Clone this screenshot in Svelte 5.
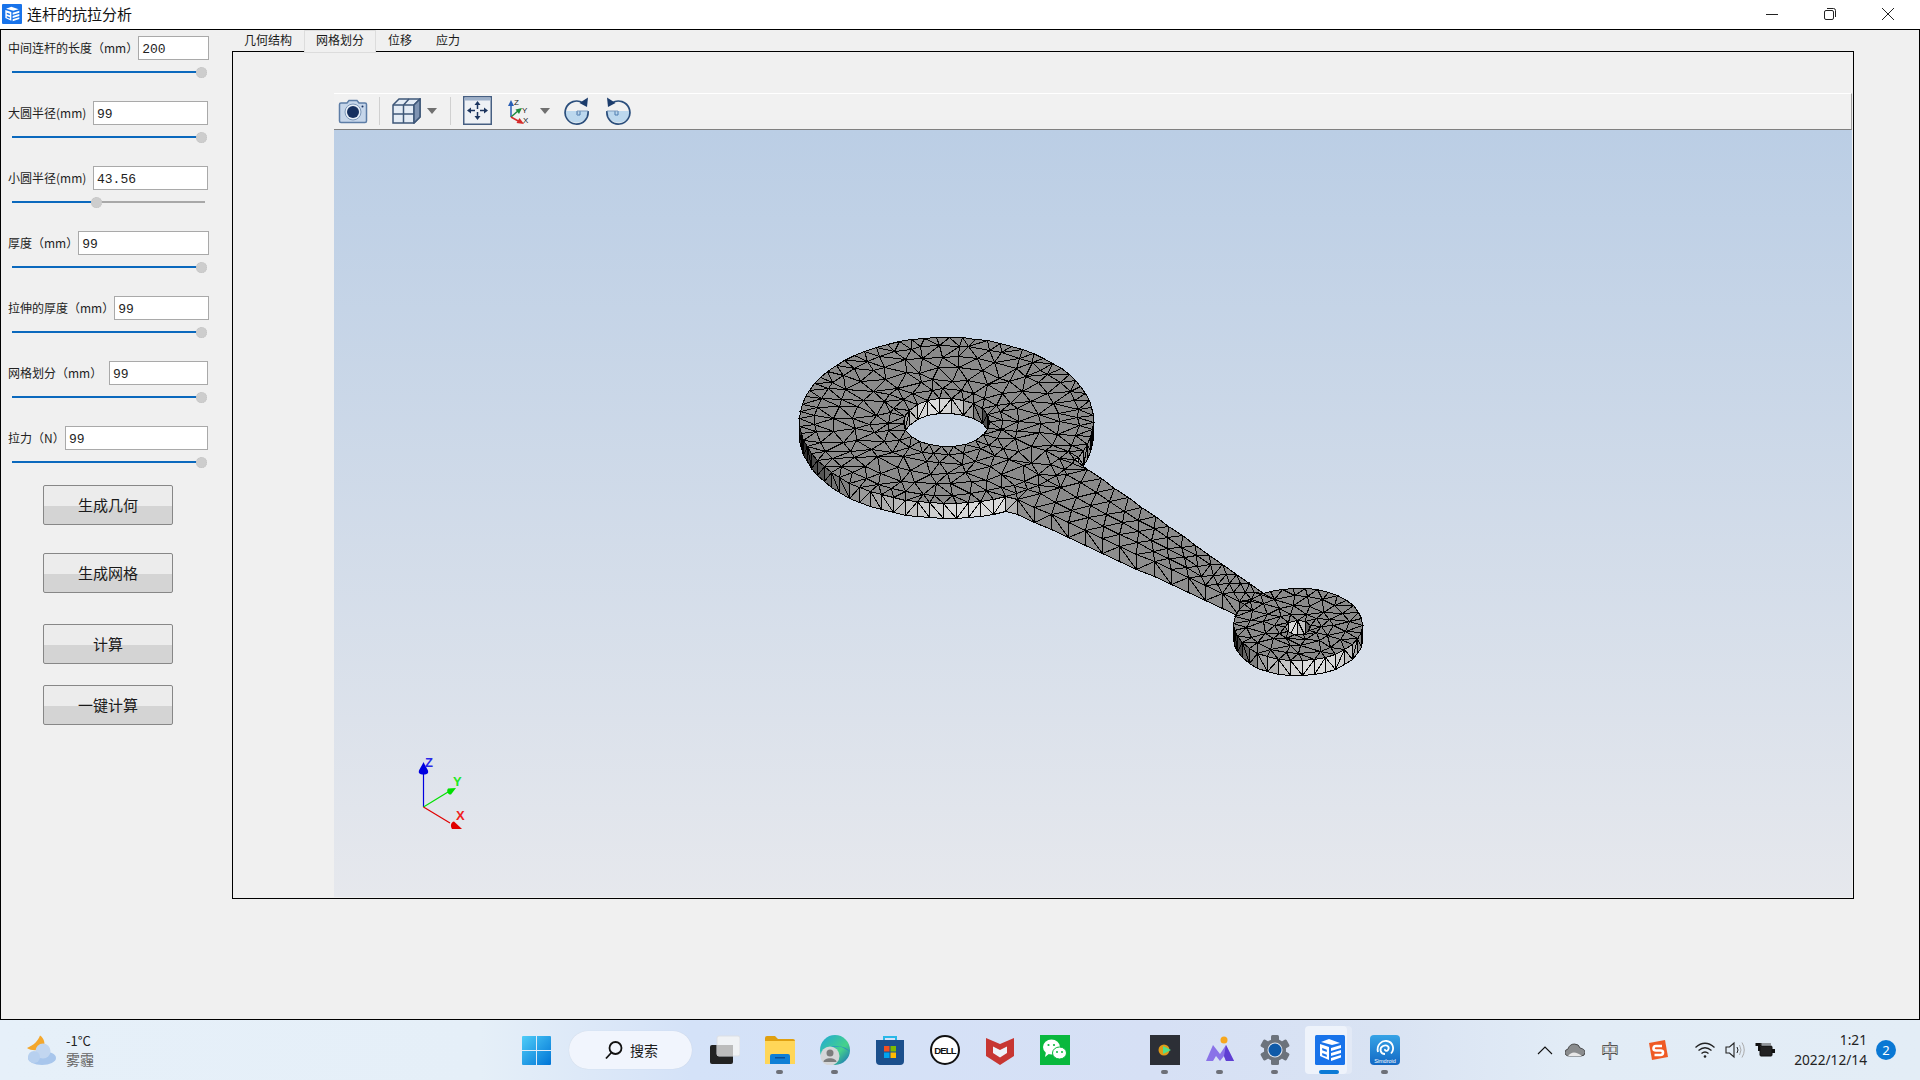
<script>
  const K = 0.565;
  const big = { x: 946, y: 420, r: 147, hy: 422, hr: 43 };
  const small = { x: 1297.5, y: 624, r: 64.5, hy: 627, hr: 13 };
  const H = 15;
  const ARM = [[1060, 449.4], [1290, 612], [1290, 624], [1000, 491]].map(([x, y]) => [x, y / K]);

  function rng(seed) {
    return () => {
      seed |= 0; seed = (seed + 0x6d2b79f5) | 0;
      let t = Math.imul(seed ^ (seed >>> 15), 1 | seed);
      t = (t + Math.imul(t ^ (t >>> 7), 61 | t)) ^ t;
      return ((t ^ (t >>> 14)) >>> 0) / 4294967296;
    };
  }
  const R = rng(42);
  const j = (a) => (R() - 0.5) * 2 * a;

  function inDisc(p, d, r, cy) { return Math.hypot(p[0] - d.x, p[1] - cy / K) < r; }
  function inArm(p) {
    let c = false;
    for (let i = 0, n = ARM.length, k = n - 1; i < n; k = i++) {
      const a = ARM[i], b = ARM[k];
      if ((a[1] > p[1]) !== (b[1] > p[1]) && p[0] < ((b[0] - a[0]) * (p[1] - a[1])) / (b[1] - a[1]) + a[0]) c = !c;
    }
    return c;
  }
  function inside(p) {
    if (inDisc(p, big, big.hr, big.hy) || inDisc(p, small, small.hr, small.hy)) return false;
    return inDisc(p, big, big.r, big.y) || inDisc(p, small, small.r, small.y) || inArm(p);
  }

  function ring(d, cy, r, n, jit) {
    const pts = [];
    const off = R() * 6.28;
    for (let i = 0; i < n; i++) {
      const a = off + (i / n) * Math.PI * 2 + (jit ? j((1.4 / n) * 1.2) : j(0.004));
      const rr = r + (jit ? j(jit) : j(0.12));
      pts.push([d.x + rr * Math.cos(a), cy / K + rr * Math.sin(a)]);
    }
    return pts;
  }

  function buildPoints() {
    let pts = [];
    [[147, 72, 0], [132, 52, 2], [113, 38, 3.5], [93, 30, 4], [74, 26, 4], [58, 24, 2]].forEach(([r, n, jt]) =>
      pts.push(...ring(big, big.y + (big.hy - big.y) * (1 - r / 147), r, n, jt)));
    pts.push(...ring(big, big.hy, 43, 22, 0));
    [[64.5, 34, 0], [50, 20, 2], [35, 14, 2], [23, 10, 1.5]].forEach(([r, n, jt]) =>
      pts.push(...ring(small, small.y + (small.hy - small.y) * (1 - r / 64.5), r, n, jt)));
    pts.push(...ring(small, small.hy, 13, 9, 0));

    const outDiscs = (p) =>
      !inDisc(p, big, big.r - 3, big.y) && !inDisc(p, small, small.r - 3, small.y);
    const [A, B, C, D] = ARM;
    const N = 17;
    const rows = 4;
    for (let i = 0; i <= N; i++) {
      for (let u = 0; u <= rows; u++) {
        const t = (i + (u % 2 ? 0.5 : 0)) / N;
        if (t > 1) continue;
        const a = [A[0] + (B[0] - A[0]) * t, A[1] + (B[1] - A[1]) * t];
        const b = [D[0] + (C[0] - D[0]) * t, D[1] + (C[1] - D[1]) * t];
        const uu = u / rows;
        const jit = u === 0 || u === rows ? 0.05 : 1.2;
        const p = [a[0] + (b[0] - a[0]) * uu + j(jit), a[1] + (b[1] - a[1]) * uu + j(jit)];
        if (outDiscs(p)) pts.push(p);
      }
    }
    return pts;
  }

  function delaunay(pts) {
    const P = [...pts, [-5000, -5000], [8000, -5000], [1000, 9000]];
    const n = pts.length;
    const cc = (t) => {
      const [a, b, c] = t.map((i) => P[i]);
      const d = 2 * (a[0] * (b[1] - c[1]) + b[0] * (c[1] - a[1]) + c[0] * (a[1] - b[1]));
      const s = (q) => q[0] * q[0] + q[1] * q[1];
      const x = (s(a) * (b[1] - c[1]) + s(b) * (c[1] - a[1]) + s(c) * (a[1] - b[1])) / d;
      const y = (s(a) * (c[0] - b[0]) + s(b) * (a[0] - c[0]) + s(c) * (b[0] - a[0])) / d;
      return { x, y, r: (a[0] - x) ** 2 + (a[1] - y) ** 2 };
    };
    let tris = [[n, n + 1, n + 2]].map((v) => ({ v, c: cc(v) }));
    for (let i = 0; i < n; i++) {
      const p = P[i];
      const bad = [], keep = [];
      for (const t of tris) ((p[0] - t.c.x) ** 2 + (p[1] - t.c.y) ** 2 < t.c.r ? bad : keep).push(t);
      const edges = new Map();
      for (const t of bad) {
        const [a, b, c] = t.v;
        for (const [u, w] of [[a, b], [b, c], [c, a]]) {
          const key = u < w ? u + '_' + w : w + '_' + u;
          if (edges.has(key)) edges.set(key, null); else edges.set(key, [u, w]);
        }
      }
      for (const e of edges.values()) {
        if (e) { const v = [e[0], e[1], i]; keep.push({ v, c: cc(v) }); }
      }
      tris = keep;
    }
    return tris.map((t) => t.v).filter((v) => v.every((i) => i < n));
  }

  const fx = (x, y) => Math.round(x) + 0.5 + ' ' + (Math.round(y) + 0.5);

  function buildMesh() {
    const pts = buildPoints();
    const tris = delaunay(pts).filter((v) => {
      const c = [(pts[v[0]][0] + pts[v[1]][0] + pts[v[2]][0]) / 3, (pts[v[0]][1] + pts[v[1]][1] + pts[v[2]][1]) / 3];
      return inside(c);
    });
    const S = (p) => [p[0], p[1] * K];
    let top = '';
    const edgeCount = new Map();
    for (const v of tris) {
      const [a, b, c] = v.map((i) => S(pts[i]));
      top += `M${fx(a[0], a[1])}L${fx(b[0], b[1])}L${fx(c[0], c[1])}Z`;
      [[v[0], v[1], v[2]], [v[1], v[2], v[0]], [v[2], v[0], v[1]]].forEach(([u, w, o]) => {
        const key = u < w ? u + '_' + w : w + '_' + u;
        if (edgeCount.has(key)) edgeCount.set(key, null); else edgeCount.set(key, [u, w, o]);
      });
    }
    const walls = [];
    let flip = false;
    const L = [0.3, 0.95];
    for (const e of edgeCount.values()) {
      if (!e) continue;
      const [a, b, o] = [pts[e[0]], pts[e[1]], pts[e[2]]];
      let nx = b[1] - a[1], ny = a[0] - b[0];
      const len = Math.hypot(nx, ny);
      nx /= len; ny /= len;
      if (nx * (o[0] - a[0]) + ny * (o[1] - a[1]) > 0) { nx = -nx; ny = -ny; }
      if (ny <= 0.02) continue;
      const sa = S(a), sb = S(b);
      const lum = Math.max(0, nx * L[0] + ny * L[1]);
      const g = Math.round(45 + 175 * lum);
      flip = !flip;
      const d = `M${fx(sa[0], sa[1])}L${fx(sb[0], sb[1])}L${fx(sb[0], sb[1] + H)}L${fx(sa[0], sa[1] + H)}Z` +
        (flip ? `M${fx(sa[0], sa[1])}L${fx(sb[0], sb[1] + H)}` : `M${fx(sb[0], sb[1])}L${fx(sa[0], sa[1] + H)}`);
      walls.push({ d, fill: `rgb(${g},${g},${g})`, y: sa[1] + sb[1] });
    }
    walls.sort((p, q) => p.y - q.y);
    return { top, walls };
  }

  const mesh = buildMesh();

  const fields = [
    { label: '中间连杆的长度（mm）', value: '200', width: 71, pos: 100 },
    { label: '大圆半径(mm)', value: '99', width: 115, pos: 100 },
    { label: '小圆半径(mm)', value: '43.56', width: 115, pos: 44 },
    { label: '厚度（mm）', value: '99', width: 131, pos: 100 },
    { label: '拉伸的厚度（mm）', value: '99', width: 95, pos: 100 },
    { label: '网格划分（mm）', value: '99', width: 99, pos: 100 },
    { label: '拉力（N）', value: '99', width: 143, pos: 100 }
  ];
  const buttons = ['生成几何', '生成网格', '计算', '一键计算'];
  const tabs = ['几何结构', '网格划分', '位移', '应力'];
  const gearAngles = [0, 60, 120, 180, 240, 300];
</script>

{#snippet appIcon()}
  <rect width="30" height="30" rx="1.5" fill="#1873ea" />
  <path d="M14 4 L25 8 L17 10 L6 7 Z" fill="#fff" />
  <path d="M5 9 L14 12 V25 L5 21 Z" fill="#fff" />
  <path d="M7.2 13 L11.8 14.8 V17 L7.2 15.2 Z M7.2 18 L11.8 19.8 V22 L7.2 20.2 Z" fill="#1873ea" />
  <path d="M16 13 L26 10 V13 L16 16 Z M16 18 L26 15 V18 L16 21 Z M16 23 L26 20 V22.5 L16 26 Z" fill="#fff" />
{/snippet}

{#snippet arrowDown()}
  <svg class="tool-arrow" width="10" height="6" viewBox="0 0 10 6"><path d="M0 0H10L5 6Z" fill="#707070" /></svg>
{/snippet}

<div class="window">
  <header class="titlebar">
    <svg class="title-icon" width="20" height="20" viewBox="0 0 30 30">{@render appIcon()}</svg>
    <span class="title">连杆的抗拉分析</span>
    <div class="controls">
      <svg width="12" height="12" viewBox="0 0 12 12"><path d="M0 6.5H12" stroke="#222" /></svg>
      <svg width="12" height="12" viewBox="0 0 12 12" fill="none" stroke="#222"><rect x="0.5" y="2.5" width="9" height="9" rx="1.5" /><path d="M3 0.5H9.5Q11.5 0.5 11.5 2.5V9" /></svg>
      <svg width="12" height="12" viewBox="0 0 12 12"><path d="M0 0L12 12M12 0L0 12" stroke="#222" /></svg>
    </div>
  </header>

  <main class="body">
    <aside class="sidebar">
      <div class="fields">
        {#each fields as f}
          <div class="field">
            <div class="field-row">
              <label for={f.label}>{f.label}</label>
              <input id={f.label} value={f.value} readonly style:width="{f.width}px" />
            </div>
            <div class="slider">
              <div class="track"></div>
              <div class="fill" style:width="{f.pos}%"></div>
              <div class="thumb" style:left="{f.pos === 100 ? 98.4 : f.pos}%"></div>
            </div>
          </div>
        {/each}
      </div>
      <div class="buttons">
        {#each buttons as b}
          <button type="button">{b}</button>
        {/each}
      </div>
    </aside>

    <section class="tabs">
      <nav class="tabbar">
        {#each tabs as t, i}
          <span class="tab" class:active={i === 1}>{t}</span>
        {/each}
      </nav>
      <div class="pane">
        <div class="toolbar">
          <svg class="t-camera" width="30" height="26" viewBox="0 0 30 26">
            <path d="M1.5 6.5Q1.5 5 3 5H9L11 2.5H19L21 5H27Q28.500 5 28.500 6.500V23Q28.500 24.500 27 24.500H3Q1.500 24.500 1.500 23Z" fill="#c6d6ea" stroke="#5d7da6" stroke-width="1.500" />
            <circle cx="15" cy="14" r="8" fill="#e8eff7" stroke="#7d97b8" />
            <circle cx="15" cy="14" r="6" fill="#17305f" />
            <circle cx="24.500" cy="8.500" r="1" fill="#17305f" />
          </svg>
          <i class="sep s1"></i>
          <svg class="t-cube" width="29" height="26" viewBox="0 0 29 26" fill="#e4ecf5" stroke="#3e5778" stroke-width="1.500">
            <path d="M1 7L7 1H28V19L22 25H1Z" />
            <path d="M1 7H22V25M22 7L28 1M11.500 7V25M1 16H22M17 1L11.500 7" fill="none" />
            <path d="M22 7L28 1V19L22 25Z" fill="#7f94b2" />
          </svg>
          {@render arrowDown()}
          <i class="sep s2"></i>
          <svg class="t-fit" width="29" height="29" viewBox="0 0 29 29">
            <rect x="0.750" y="0.750" width="27.500" height="27.500" fill="#eef1f5" stroke="#465f82" stroke-width="1.500" />
            <rect x="1.500" y="1.500" width="26" height="3" fill="#9db0c9" />
            <path d="M14.500 7V13M14.500 16V22M6 14.500H12M17 14.500H23" stroke="#1c355f" stroke-width="1.500" />
            <path d="M14.500 5L11.500 9H17.500ZM14.500 24L11.500 20H17.500ZM4 14.500L8 11.500V17.500ZM25 14.500L21 11.500V17.500Z" fill="#1c355f" />
          </svg>
          <svg class="t-axes" width="27" height="28" viewBox="0 0 27 28">
            <path d="M6 20V7" stroke="#2a5fb5" stroke-width="1.500" />
            <path d="M6 3L3 9H9Z" fill="#2a5fb5" />
            <path d="M6 20L14 13" stroke="#1e8a3c" stroke-width="1.500" />
            <path d="M17 11L10.500 12.500L14 17Z" fill="#1e8a3c" />
            <path d="M6 20L15 25" stroke="#d62a2a" stroke-width="1.500" />
            <path d="M19 27L11.500 26L14.500 21Z" fill="#d62a2a" />
            <text x="9" y="8" class="axt">Z</text>
            <text x="17" y="16" class="axt">Y</text>
            <text x="18" y="26" class="axt">X</text>
          </svg>
          {@render arrowDown()}
          <svg class="t-rot1" width="27" height="28" viewBox="0 0 27 28">
            <path d="M25 14A11.500 11.500 0 0 1 2 14H25" fill="#bcd8ee" />
            <path d="M17 14V18H14V14" fill="none" stroke="#4d7db0" />
            <path d="M20 6A11.500 11.500 0 1 0 25 14" fill="none" stroke="#2a4e7c" stroke-width="1.700" />
            <path d="M14 14H25M14.500 14V18" stroke="#7d9cc0" fill="none" />
            <path d="M25 0.500L24 10L16.500 6Z" fill="#1c3c6c" />
          </svg>
          <svg class="t-rot2" width="27" height="28" viewBox="0 0 27 28">
            <path d="M25 14A11.500 11.500 0 0 1 2 14H25" fill="#bcd8ee" />
            <path d="M10 14V18H13V14" fill="none" stroke="#4d7db0" />
            <path d="M7 6A11.500 11.500 0 1 1 2 14" fill="none" stroke="#2a4e7c" stroke-width="1.700" />
            <path d="M2 14H13" stroke="#7d9cc0" fill="none" />
            <path d="M2 0.500L3 10L10.500 6Z" fill="#1c3c6c" />
          </svg>
        </div>
        <div class="view">
          <svg class="scene" viewBox="334 130 1518 767" width="1518" height="767">
            <g shape-rendering="crispEdges">
              {#each mesh.walls as w}
                <path d={w.d} fill={w.fill} stroke="#000" />
              {/each}
              <path d={mesh.top} fill="#8a8a8a" stroke="#000" />
            </g>
            <path d="M423.500 807V766" stroke="#0000e0" stroke-width="1.200" />
            <path d="M423.500 762C421 768 418 770 419 773C421 775 426 775 428 773C429 770 426 768 423.500 762Z" fill="#0000e0" />
            <path d="M423.500 807L448 792" stroke="#00e000" stroke-width="1.200" />
            <path d="M456 788L448 788.500C446 791 448 795 451 794.500Z" fill="#00e000" />
            <path d="M423.500 807L450 823" stroke="#e00000" stroke-width="1.200" />
            <path d="M462 829H452C450 826 451 822 454 821.500Z" fill="#e00000" />
            <text x="425" y="767" class="ax z">Z</text>
            <text x="453" y="786" class="ax y">Y</text>
            <text x="456" y="820" class="ax x">X</text>
          </svg>
        </div>
      </div>
    </section>
  </main>

  <footer class="taskbar">
    <div class="weather">
      <svg width="30" height="30" viewBox="0 0 30 30">
        <path d="M14 0.500C12 6 8 10 1 13C5 16 13 16 17 13C20 9 18 3 14 0.500Z" fill="#f4a72c" />
        <ellipse cx="16" cy="23" rx="14" ry="7" fill="#a8c6ec" />
        <circle cx="17" cy="16" r="7.500" fill="#c2d6f0" />
        <circle cx="8" cy="22" r="6" fill="#b7d0ef" />
      </svg>
      <div class="wtext"><span class="temp">-1°C</span><span class="wname">雾霾</span></div>
    </div>
    <svg class="winlogo" width="29" height="29" viewBox="0 0 29 29">
      <defs>
        <linearGradient id="wl" x1="0" y1="0" x2="1" y2="1"><stop offset="0" stop-color="#4fcdf8" /><stop offset="1" stop-color="#0074d6" /></linearGradient>
      </defs>
      <path d="M1 0H14V14H0V1Q0 0 1 0ZM15 0H28Q29 0 29 1V14H15ZM0 15H14V29H1Q0 29 0 28ZM15 15H29V28Q29 29 28 29H15Z" fill="url(#wl)" />
    </svg>
    <div class="search">
      <svg width="18" height="20" viewBox="0 0 18 20" fill="none" stroke="#111" stroke-width="1.800"><circle cx="10.500" cy="8" r="6" /><path d="M6.500 12.500L1 18.500" /></svg>
      <span>搜索</span>
    </div>
    <div class="apps">
      <div class="slot">
        <svg width="30" height="30" viewBox="0 0 30 30"><rect x="0" y="10" width="23" height="19" rx="2" fill="#222" /><rect x="7" y="1" width="23" height="20" rx="2" fill="#f0f2f5" stroke="#dcdfe5" /><rect x="7" y="10" width="16" height="11" fill="#bcbcbc" /></svg>
      </div>
      <div class="slot dot">
        <svg width="30" height="28" viewBox="0 0 30 28"><path d="M0 2Q0 0 2 0H10L13 3H28Q30 3 30 5V8H0Z" fill="#e0a010" /><rect y="5" width="30" height="23" fill="#ffd658" /><path d="M5 28V20Q5 18 7 18H23Q25 18 25 20V28Z" fill="#0f7fd6" /><rect x="10" y="21" width="10" height="1.500" fill="#0a4f96" /></svg>
      </div>
      <div class="slot dot">
        <svg width="30" height="30" viewBox="0 0 30 30"><defs><linearGradient id="eg" x1="0" y1="0" x2="1" y2="1"><stop offset="0" stop-color="#1fa8d8" /><stop offset="0.600" stop-color="#46d28a" /><stop offset="1" stop-color="#1564c0" /></linearGradient></defs><circle cx="15" cy="15" r="15" fill="url(#eg)" /><path d="M30 17C26 11 16 9 9 14C14 8 24 12 30 17Z" fill="#2a7ed0" /><circle cx="10" cy="21" r="9.500" fill="#d5d6d8" /><circle cx="10" cy="18" r="3.500" fill="#7d7d7d" /><path d="M3.500 27C4 22 16 22 16.500 27Z" fill="#7d7d7d" /></svg>
      </div>
      <div class="slot">
        <svg width="30" height="30" viewBox="0 0 30 30"><path d="M9 6V2H21V6" fill="none" stroke="#28b8e8" stroke-width="2" /><path d="M1 5H29V26Q29 30 25 30H5Q1 30 1 26Z" fill="#1b4f8c" /><rect x="9" y="11" width="5.500" height="5.500" fill="#f25022" /><rect x="15.500" y="11" width="5.500" height="5.500" fill="#7fba00" /><rect x="9" y="17.500" width="5.500" height="5.500" fill="#00a4ef" /><rect x="15.500" y="17.500" width="5.500" height="5.500" fill="#ffb900" /></svg>
      </div>
      <div class="slot">
        <svg width="30" height="30" viewBox="0 0 30 30"><circle cx="15" cy="15" r="14" fill="#fff" stroke="#111" stroke-width="2" /><text x="15" y="18.500" class="dell">DELL</text></svg>
      </div>
      <div class="slot">
        <svg width="28" height="30" viewBox="0 0 28 30"><path d="M0 3L14 9L28 3V21L14 30L0 21Z" fill="#c73632" /><path d="M7 11.500L14 15L21 11.500V18L14 22.500L7 18Z" fill="#eef2f8" /></svg>
      </div>
      <div class="slot">
        <svg width="30" height="30" viewBox="0 0 30 30"><rect width="30" height="30" fill="#09b83e" /><ellipse cx="11.500" cy="12" rx="8.500" ry="7.500" fill="#fff" /><path d="M6 17L5 22L10 18Z" fill="#fff" /><ellipse cx="19.500" cy="18" rx="7" ry="6" fill="#fff" stroke="#09b83e" /><circle cx="8.500" cy="10" r="1.100" fill="#09b83e" /><circle cx="14" cy="10" r="1.100" fill="#09b83e" /><circle cx="17" cy="17" r="1" fill="#09b83e" /><circle cx="22" cy="17" r="1" fill="#09b83e" /></svg>
      </div>
      <div class="slot"></div>
      <div class="slot dot">
        <svg width="30" height="30" viewBox="0 0 30 30"><rect width="30" height="30" fill="#2c2f36" /><circle cx="14" cy="15" r="5.500" fill="#e09b18" /><path d="M13 11L21 15L13 19Z" fill="#4fe08c" /></svg>
      </div>
      <div class="slot dot">
        <svg width="30" height="30" viewBox="0 0 30 30"><circle cx="19" cy="5" r="3.500" fill="#f7a71e" /><path d="M1 26L8 10L15 19L21 10L29 26H21L19 21L15 26L11 21L8 26Z" fill="#8a72e8" /><path d="M21 10L29 26H21L19 21Z" fill="#5f3fd2" /></svg>
      </div>
      <div class="slot dot">
        <svg width="30" height="30" viewBox="0 0 30 30">{#each gearAngles as a}<rect x="11" y="0" width="8" height="8" rx="1.500" fill="#6c737c" transform="rotate({a} 15 15)" />{/each}<circle cx="15" cy="15" r="11" fill="#6c737c" /><circle cx="15" cy="15" r="7.500" fill="#e2e6ee" /><circle cx="15" cy="15" r="6.500" fill="#0f5aa8" /></svg>
      </div>
      <div class="slot active">
        <i class="hl-back"></i><i class="hl"></i>
        <svg class="over" width="30" height="30" viewBox="0 0 30 30">{@render appIcon()}</svg>
        <i class="run"></i>
      </div>
      <div class="slot dot">
        <svg width="30" height="30" viewBox="0 0 30 30"><defs><linearGradient id="sg" x1="0" y1="0" x2="0" y2="1"><stop offset="0" stop-color="#36a3e6" /><stop offset="1" stop-color="#1268c4" /></linearGradient></defs><rect width="30" height="30" rx="4" fill="url(#sg)" /><path d="M15 19C10 19 9 13 13 11C17 9 20 12 18 15C17 16.500 14.500 16 15 14M8 17C6 10 12 5 17 6C23 7 25 14 21 18.500" fill="none" stroke="#fff" stroke-width="1.800" /><text x="15" y="27.500" class="simd">Simdroid</text></svg>
      </div>
    </div>
    <div class="tray">
      <svg class="tr-a" width="20" height="20" viewBox="0 0 20 20"><path d="M3 14L10 7L17 14" fill="none" stroke="#111" stroke-width="1.100" /></svg>
      <svg class="tr-b" width="20" height="20" viewBox="0 0 20 20"><path d="M4.500 16Q0 16 0 12.500Q0 9.500 3 9Q4.500 4 9.500 4Q14 4 15 8Q20 9 20 12.500Q20 16 16 16Z" fill="#8a8c8e" stroke="#333" stroke-width="0.800" /><path d="M3 16Q8 9 17 16Z" fill="#e8e8e8" /></svg>
      <span class="zh">中</span>
      <svg class="tr-d" width="20" height="20" viewBox="0 0 20 20"><path d="M1 3L17 0L20 17L4 20Z" fill="#ef5a24" /><path d="M14 6H8Q5.500 6 5.500 8.500Q5.500 10.500 8 10.500H12.500Q15 10.500 15 12.500Q15 15 12.500 15H6.500" fill="none" stroke="#fff" stroke-width="2.600" /></svg>
      <svg class="tr-e" width="20" height="20" viewBox="0 0 20 20" fill="none" stroke="#222" stroke-width="1.300"><path d="M0.500 7.500Q10 -1 19.500 7.500M3.500 10.500Q10 5 16.500 10.500M6.500 13.500Q10 10.500 13.500 13.500" /><circle cx="10" cy="16.500" r="1.300" fill="#222" stroke="none" /></svg>
      <svg class="tr-f" width="20" height="20" viewBox="0 0 20 20" fill="none"><path d="M1 7H4.500L9 3V17L4.500 13H1Z" stroke="#222" stroke-width="1.100" /><path d="M12 7Q14 10 12 13" stroke="#222" /><path d="M14.500 5Q17.500 10 14.500 15M17 2.500Q21.500 10 17 17.500" stroke="#aaa" /></svg>
      <svg class="tr-g" width="20" height="20" viewBox="0 0 20 20"><path d="M2 0V3M5 0V3M0.500 3H6.500V6H5V11H3V6H0.500Z" fill="#111" /><rect x="5" y="6" width="12" height="10" rx="1" fill="#222" stroke="#111" /><rect x="17" y="9" width="3" height="4" fill="#111" /><path d="M5 4H16" stroke="#444" /></svg>
      <div class="clock"><span>1:21</span><span>2022/12/14</span></div>
      <div class="badge">2</div>
    </div>
  </footer>
</div>

<style>
  :global(body) {
    margin: 0;
    background: #f0f0f0;
  }
  .window {
    width: 1920px;
    height: 1080px;
    display: flex;
    flex-direction: column;
    overflow: hidden;
    font-family: "Noto Sans CJK SC", "Noto Sans", sans-serif;
    color: #1c1c1c;
  }
  .titlebar {
    height: 29px;
    background: #fff;
    display: flex;
    align-items: center;
    flex: none;
    padding: 0 0 2px 2px;
    box-sizing: border-box;
  }
  .title-icon { margin-top: 1px; }
  .title {
    font-size: 15px;
    margin-left: 5px;
    color: #111;
  }
  .controls {
    margin-left: auto;
    display: flex;
    gap: 46px;
    padding-right: 26px;
  }
  .body {
    flex: none;
    height: 991px;
    box-sizing: border-box;
    border: 1px solid #000;
    background: #f0f0f0;
    display: flex;
  }
  .sidebar {
    width: 231px;
    flex: none;
    box-sizing: border-box;
    padding-top: 6px;
  }
  .fields {
    display: flex;
    flex-direction: column;
    gap: 17px;
    width: 207px;
  }
  .field { height: 48px; }
  .field-row {
    height: 24px;
    display: flex;
    justify-content: space-between;
    align-items: center;
    padding-left: 7px;
    padding-right: 0;
  }
  label {
    font-size: 12px;
    line-height: 23px;
    padding-bottom: 1px;
    white-space: nowrap;
    color: #222;
  }
  input {
    height: 24px;
    box-sizing: border-box;
    border: 1px solid #a9a9a9;
    background: #fff;
    padding: 2px 0 0 3px;
    margin: 0;
    font-family: "Liberation Mono", monospace;
    font-size: 13px;
    color: #222;
    outline: none;
  }
  .slider {
    position: relative;
    height: 24px;
    margin: 0 3px 0 11px;
  }
  .track, .fill {
    position: absolute;
    left: 0;
    top: 11px;
    height: 2px;
  }
  .track {
    width: 100%;
    background: #a8a8a8;
  }
  .fill { background: #0b69bd; }
  .thumb {
    position: absolute;
    top: 6.500px;
    width: 11px;
    height: 11px;
    margin-left: -5.500px;
    border-radius: 50%;
    background: #cdcdcd;
    outline: 1px dotted #c4c4c4;
    outline-offset: -1px;
  }
  .buttons {
    display: flex;
    flex-direction: column;
    padding-left: 42px;
  }
  button {
    width: 130px;
    height: 40px;
    box-sizing: border-box;
    border: 1px solid #878787;
    border-radius: 2px;
    background: linear-gradient(#ececec 0, #ececec 52%, #d4d4d4 52%, #d4d4d4 100%);
    font-family: inherit;
    font-size: 15px;
    color: #1a1a1a;
    padding: 0 0 2px;
  }
  button:nth-child(1) { margin-top: 11px; }
  button:nth-child(2) { margin-top: 28px; }
  button:nth-child(3) { margin-top: 31px; }
  button:nth-child(4) { margin-top: 21px; }
  .tabs {
    width: 1622px;
    display: flex;
    flex-direction: column;
  }
  .tabbar {
    height: 21px;
    display: flex;
    flex: none;
  }
  .tab {
    font-size: 12px;
    line-height: 19px;
    padding: 0 12px;
    color: #1a1a1a;
    box-sizing: border-box;
  }
  .tab.active {
    background: #f0f0f0;
    border: 1px solid #dcdcdc;
    border-bottom: none;
    padding: 0 11px;
    line-height: 18px;
    margin-bottom: -1px;
    position: relative;
    box-shadow: 0 1px 0 #dcdcdc;
  }
  .pane {
    width: 1622px;
    height: 848px;
    box-sizing: border-box;
    border: 1px solid #000;
    padding: 41px 1px 1px 101px;
    display: flex;
    flex-direction: column;
    background: #f0f0f0;
  }
  .toolbar {
    height: 37px;
    flex: none;
    box-sizing: border-box;
    background: #f1f1f1;
    border-top: 1px solid #fff;
    border-bottom: 1px solid #808080;
    border-right: 1px solid #a0a0a0;
    display: flex;
    align-items: center;
    padding: 0 0 2px 4px;
  }
  .sep {
    width: 1px;
    height: 28px;
    background: #d0d0d0;
    flex: none;
  }
  .s1 { margin-left: 11px; }
  .t-cube { margin-left: 12px; }
  .tool-arrow { margin-left: 6px; flex: none; }
  .s2 { margin-left: 13px; }
  .t-fit { margin-left: 12px; }
  .t-axes { margin-left: 13px; margin-right: 2px; }
  .t-rot1 { margin-left: 13px; }
  .t-rot2 { margin-left: 15px; }
  .axt {
    font-family: "Liberation Sans", sans-serif;
    font-size: 8px;
    fill: #222;
  }
  .view {
    flex: 1;
    position: relative;
    overflow: hidden;
    background: linear-gradient(#bbcee5, #e6e8ed);
  }
  .scene {
    position: absolute;
    left: 0;
    top: 0;
    display: block;
  }
  .ax {
    font-family: "Liberation Sans", sans-serif;
    font-weight: 700;
    font-size: 13px;
  }
  .ax.z { fill: #2a2ae8; }
  .ax.y { fill: #22e822; }
  .ax.x { fill: #f02020; }
  .taskbar {
    height: 60px;
    flex: none;
    display: flex;
    align-items: center;
    background: linear-gradient(90deg, #e6f0f9 0, #e5eff8 25%, #d4e2f8 36%, #d6e0f5 60%, #d9e3f3 72%, #e2ecf6 82%, #e3edf6 100%);
  }
  .weather {
    width: 522px;
    flex: none;
    box-sizing: border-box;
    padding-left: 26px;
    display: flex;
    align-items: center;
    gap: 10px;
  }
  .wtext {
    display: flex;
    flex-direction: column;
    line-height: 19px;
  }
  .temp { font-size: 13px; color: #222; }
  .wname { font-size: 14px; color: #666; }
  .winlogo { flex: none; }
  .search {
    width: 123px;
    height: 38px;
    margin-left: 18px;
    box-sizing: border-box;
    border-radius: 19px;
    background: #f1f5fd;
    box-shadow: 0 0 1px rgba(0, 0, 0, 0.12);
    display: flex;
    align-items: center;
    padding-left: 36px;
    gap: 7px;
    font-size: 14px;
    flex: none;
  }
  .apps {
    display: flex;
    margin-left: 5px;
    flex: none;
  }
  .slot {
    width: 55px;
    height: 60px;
    position: relative;
    display: flex;
    align-items: center;
    justify-content: center;
    flex: none;
  }
  .slot.dot::after {
    content: "";
    position: absolute;
    left: 24px;
    bottom: 6px;
    width: 7px;
    height: 4px;
    border-radius: 2px;
    background: #6d7078;
  }
  .hl, .hl-back {
    position: absolute;
    top: 6px;
    height: 48px;
    border-radius: 4px;
  }
  .hl { left: 3px; width: 42px; background: #eef3fb; }
  .hl-back { left: 8px; width: 42px; background: #e2e9f6; }
  .over { position: relative; }
  .run {
    position: absolute;
    left: 17px;
    bottom: 6px;
    width: 20px;
    height: 4px;
    border-radius: 2px;
    background: #0a7ad6;
  }
  .tray {
    margin-left: 123px;
    display: flex;
    align-items: center;
    flex: none;
  }
  .tray svg { flex: none; }
  .tr-b { margin-left: 10px; }
  .tr-d { margin-left: 28px; }
  .tr-e { margin-left: 27px; }
  .tr-f { margin-left: 10px; }
  .tr-g { margin-left: 10px; }
  .zh {
    width: 20px;
    margin-left: 15px;
    font-size: 18px;
    line-height: 26px;
    text-align: center;
    color: #fff;
    -webkit-text-stroke: 0.7px #333;
    flex: none;
  }
  .dell {
    font-family: "Liberation Sans", sans-serif;
    font-weight: 700;
    font-size: 9.500px;
    letter-spacing: -0.800px;
    text-anchor: middle;
    fill: #111;
  }
  .simd {
    font-family: "Liberation Sans", sans-serif;
    font-size: 5.500px;
    text-anchor: middle;
    fill: #fff;
  }
  .clock {
    width: 92px;
    display: flex;
    flex-direction: column;
    align-items: flex-end;
    font-family: "Noto Sans", sans-serif;
    font-size: 13.700px;
    line-height: 20px;
    color: #222;
  }
  .badge {
    width: 20px;
    height: 20px;
    margin-left: 9px;
    border-radius: 50%;
    background: #0a78d4;
    color: #fff;
    font-family: "Noto Sans", sans-serif;
    font-size: 13px;
    line-height: 20px;
    text-align: center;
  }
</style>
